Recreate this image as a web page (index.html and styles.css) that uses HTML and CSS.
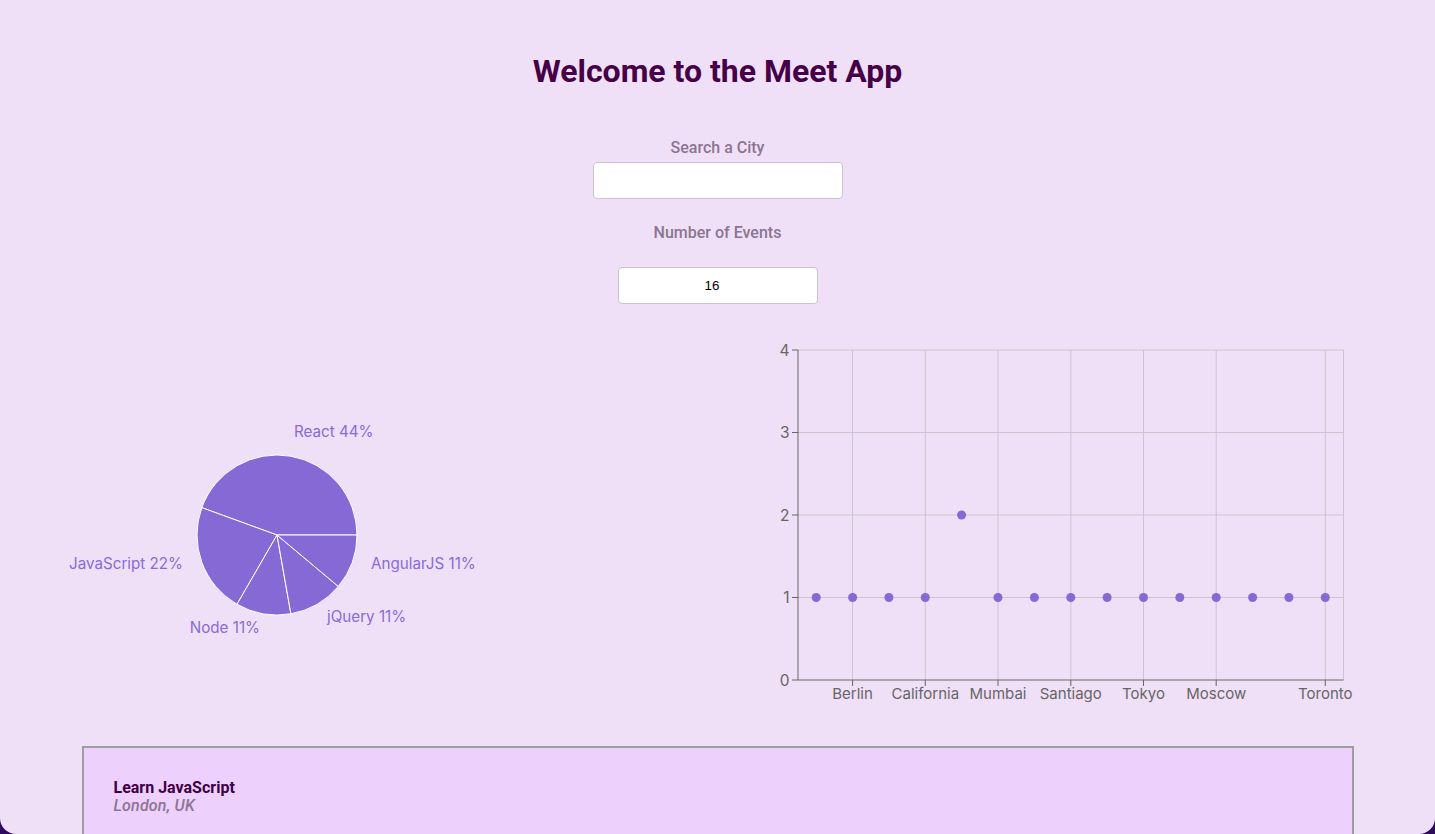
FILE: index.html
```html
<!DOCTYPE html>
<html lang="en">
<head>
<meta charset="utf-8">
<title>Meet App</title>
<link rel="stylesheet" href="styles.css">
</head>
<body>
<div class="app">
  <h1 class="title">Welcome to the Meet App</h1>
  <div class="field">
    <label class="field-label" for="city">Search a City</label>
    <input class="city-input" id="city" type="text">
  </div>
  <div class="field field-events">
    <label class="field-label" for="num">Number of Events</label>
    <input class="number-input" id="num" type="text" value="16">
  </div>
  <div class="charts">
    <svg class="pie-chart" width="717" height="370" viewBox="0 0 717 370">
      <g class="slices">
        <path d="M277,195 L357,195 A80,80 0 0 0 201.82,167.64 Z"/>
        <path d="M277,195 L201.82,167.64 A80,80 0 0 0 237,264.28 Z"/>
        <path d="M277,195 L237,264.28 A80,80 0 0 0 290.89,273.78 Z"/>
        <path d="M277,195 L290.89,273.78 A80,80 0 0 0 338.28,246.42 Z"/>
        <path d="M277,195 L338.28,246.42 A80,80 0 0 0 357,195 Z"/>
      </g>
      <g class="pie-labels">
        <text x="294" y="91" text-anchor="start">React 44%</text>
        <text x="183" y="223" text-anchor="end">JavaScript 22%</text>
        <text x="371" y="223" text-anchor="start">AngularJS 11%</text>
        <text x="260" y="287" text-anchor="end">Node 11%</text>
        <text x="327" y="276" text-anchor="start">jQuery 11%</text>
      </g>
    </svg>
    <svg class="scatter-chart" width="718" height="370" viewBox="0 0 718 370">
      <g class="grid">
        <line x1="81" y1="10" x2="626.5" y2="10"/>
        <line x1="81" y1="92.5" x2="626.5" y2="92.5"/>
        <line x1="81" y1="175" x2="626.5" y2="175"/>
        <line x1="81" y1="257.5" x2="626.5" y2="257.5"/>
        <line x1="135.6" y1="10" x2="135.6" y2="340"/>
        <line x1="208.3" y1="10" x2="208.3" y2="340"/>
        <line x1="281" y1="10" x2="281" y2="340"/>
        <line x1="353.8" y1="10" x2="353.8" y2="340"/>
        <line x1="426.5" y1="10" x2="426.5" y2="340"/>
        <line x1="499.2" y1="10" x2="499.2" y2="340"/>
        <line x1="608.3" y1="10" x2="608.3" y2="340"/>
        <line x1="626.5" y1="10" x2="626.5" y2="340"/>
      </g>
      <g class="axis">
        <line x1="81" y1="10" x2="81" y2="340"/>
        <line x1="81" y1="340" x2="626.5" y2="340"/>
        <line x1="75" y1="10" x2="81" y2="10"/>
        <line x1="75" y1="92.5" x2="81" y2="92.5"/>
        <line x1="75" y1="175" x2="81" y2="175"/>
        <line x1="75" y1="257.5" x2="81" y2="257.5"/>
        <line x1="75" y1="340" x2="81" y2="340"/>
        <line x1="135.6" y1="340" x2="135.6" y2="346"/>
        <line x1="208.3" y1="340" x2="208.3" y2="346"/>
        <line x1="281" y1="340" x2="281" y2="346"/>
        <line x1="353.8" y1="340" x2="353.8" y2="346"/>
        <line x1="426.5" y1="340" x2="426.5" y2="346"/>
        <line x1="499.2" y1="340" x2="499.2" y2="346"/>
        <line x1="608.3" y1="340" x2="608.3" y2="346"/>
      </g>
      <g class="y-ticks">
        <text x="72.5" y="10">4</text>
        <text x="72.5" y="92.5">3</text>
        <text x="72.5" y="175">2</text>
        <text x="72.5" y="257.5">1</text>
        <text x="72.5" y="340">0</text>
      </g>
      <g class="x-ticks">
        <text x="135.6" y="359">Berlin</text>
        <text x="208.3" y="359">California</text>
        <text x="281" y="359">Mumbai</text>
        <text x="353.8" y="359">Santiago</text>
        <text x="426.5" y="359">Tokyo</text>
        <text x="499.2" y="359">Moscow</text>
        <text x="608.3" y="359">Toronto</text>
      </g>
      <g class="points">
        <circle cx="99.2" cy="257.5" r="4.5"/>
        <circle cx="135.6" cy="257.5" r="4.5"/>
        <circle cx="171.9" cy="257.5" r="4.5"/>
        <circle cx="208.3" cy="257.5" r="4.5"/>
        <circle cx="244.6" cy="175" r="4.5"/>
        <circle cx="281" cy="257.5" r="4.5"/>
        <circle cx="317.4" cy="257.5" r="4.5"/>
        <circle cx="353.8" cy="257.5" r="4.5"/>
        <circle cx="390.1" cy="257.5" r="4.5"/>
        <circle cx="426.5" cy="257.5" r="4.5"/>
        <circle cx="462.8" cy="257.5" r="4.5"/>
        <circle cx="499.2" cy="257.5" r="4.5"/>
        <circle cx="535.6" cy="257.5" r="4.5"/>
        <circle cx="571.9" cy="257.5" r="4.5"/>
        <circle cx="608.3" cy="257.5" r="4.5"/>
      </g>
    </svg>
  </div>
  <div class="event-card">
    <div class="event-title">Learn JavaScript</div>
    <div class="event-location">London, UK</div>
  </div>
</div>
</body>
</html>
```

FILE: styles.css
```css
html, body {
  margin: 0;
  padding: 0;
  height: 100%;
  overflow: hidden;
  background: #2e0b5c;
}

.app {
  height: 834px;
  box-sizing: border-box;
  background: #f0e0f7;
  border-radius: 0 0 16px 16px;
  padding-top: 51px;
  display: flex;
  flex-direction: column;
  align-items: center;
  font-family: Roboto, "Liberation Sans", sans-serif;
}

.title {
  margin: 0;
  font-size: 32px;
  line-height: 40px;
  font-weight: 700;
  color: #460048;
}

.field {
  margin-top: 47px;
  display: flex;
  flex-direction: column;
  align-items: center;
}

.field-events {
  margin-top: 24px;
}

.field-label {
  font-size: 16px;
  line-height: 19px;
  font-weight: 500;
  color: #8b7592;
}

.city-input,
.number-input {
  box-sizing: border-box;
  height: 37px;
  margin: 0;
  border: 1px solid #c9c4cc;
  border-radius: 4px;
  background: #ffffff;
  font-family: "Liberation Sans", Arial, sans-serif;
  font-size: 13.33px;
  color: #000;
  padding: 0 8px;
  outline: none;
}

.city-input {
  width: 250px;
  margin-top: 5px;
}

.number-input {
  width: 200px;
  margin-top: 25px;
  padding: 0 12px 0 1px;
  text-align: center;
}

.charts {
  margin-top: 36px;
  align-self: stretch;
  display: flex;
  height: 370px;
}

.pie-chart,
.scatter-chart {
  display: block;
  flex: none;
  font-family: Inter, "Noto Sans", sans-serif;
}

.slices path {
  fill: #8769d6;
  stroke: #ffffff;
  stroke-width: 1;
}

.pie-labels text {
  fill: #8a6ad8;
  font-size: 15.2px;
  dominant-baseline: central;
}

.grid line {
  stroke: #ccc4cf;
  stroke-width: 1;
}

.axis line {
  stroke: #666;
  stroke-width: 1;
}

.y-ticks text {
  fill: #666;
  font-size: 15.5px;
  text-anchor: end;
  dominant-baseline: central;
}

.x-ticks text {
  fill: #666;
  font-size: 15px;
  text-anchor: middle;
}

.points circle {
  fill: #8769d6;
}

.event-card {
  margin-top: 36px;
  width: 1272px;
  box-sizing: border-box;
  flex: none;
  border: 2px solid #9e9e9e;
  background: #edd0fc;
  padding: 30px;
  height: 200px;
}

.event-title {
  font-size: 16px;
  line-height: 19px;
  font-weight: 700;
  color: #3e0044;
}

.event-location {
  font-size: 16px;
  line-height: 18px;
  font-weight: 500;
  font-style: italic;
  letter-spacing: 0.2px;
  color: #8b7592;
}
```
